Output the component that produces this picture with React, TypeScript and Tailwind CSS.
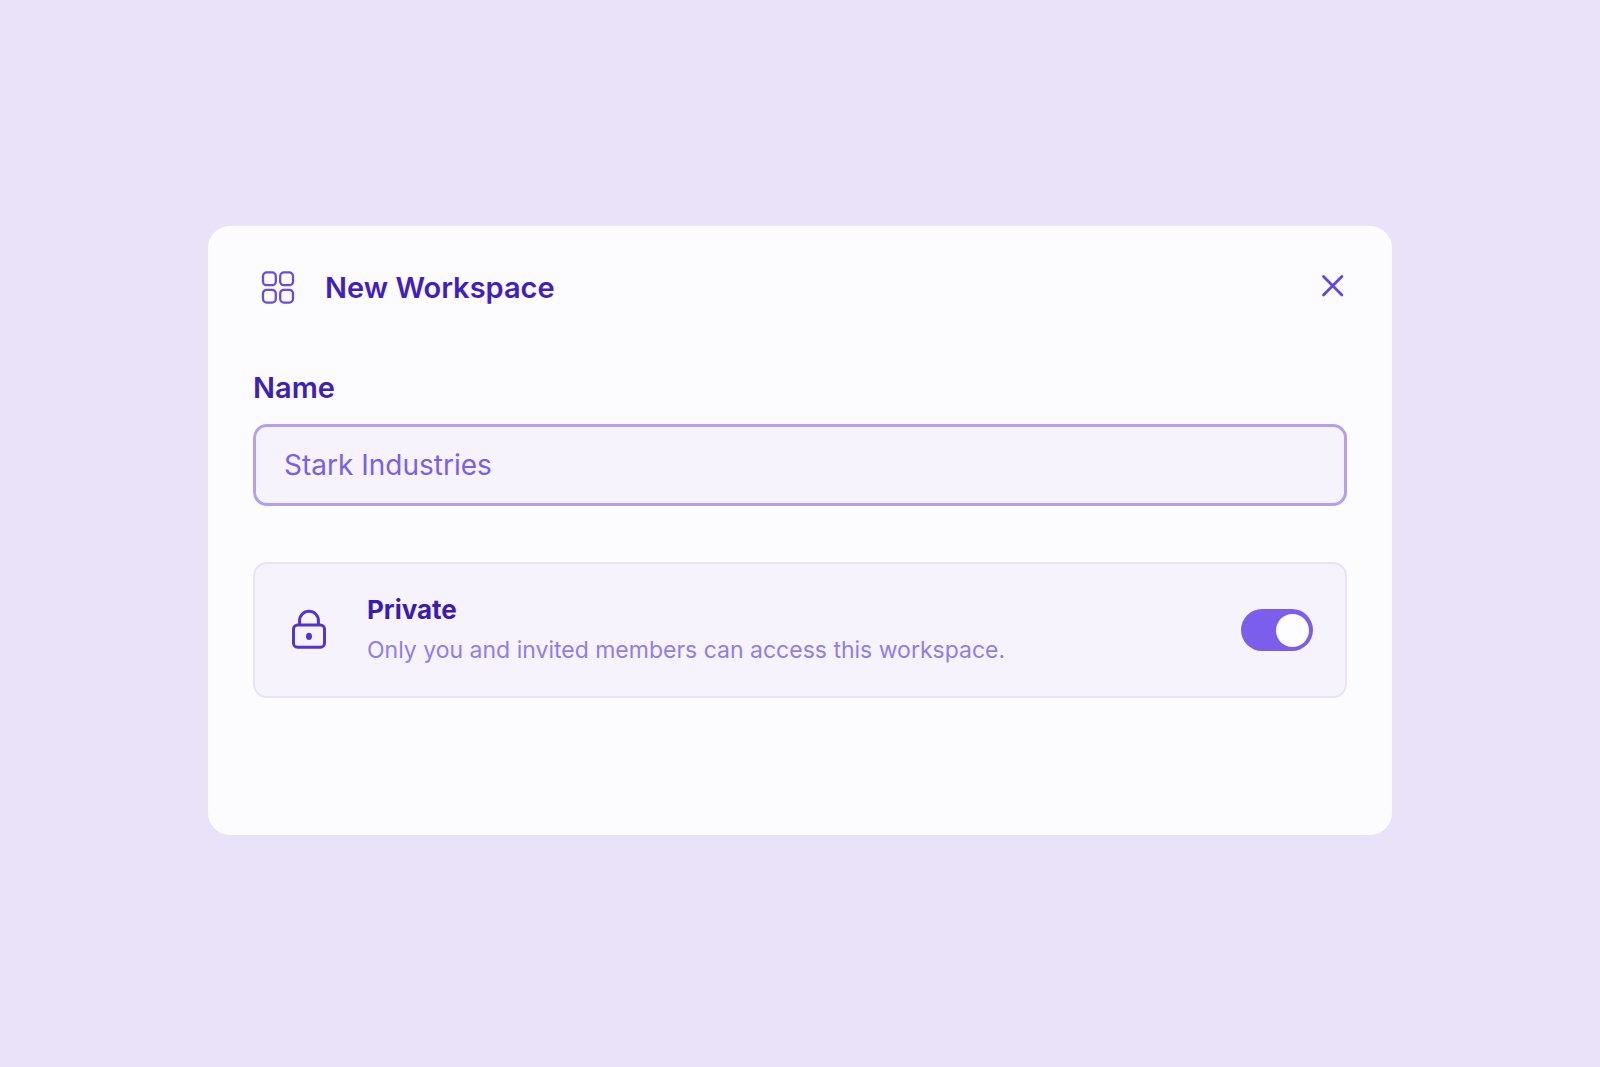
import { useState } from 'react';

export default function App() {
  const [name, setName] = useState('Stark Industries');
  const [isPrivate, setIsPrivate] = useState(true);

  return (
    <main className="min-h-screen flex items-center justify-center bg-[#eae2f8] pb-1.5 font-['Inter',sans-serif]">
      <section className="w-[74%] rounded-[22px] bg-[#fcfbfe] px-[45px] pt-[45px] pb-[137px]">
        <header className="flex items-start justify-between">
          <div className="flex items-center gap-[30px] pl-2">
            <svg width="34" height="34" viewBox="0 0 34 34" fill="none" stroke="#6a4be4" strokeWidth="2.3" aria-hidden="true">
              <rect x="2" y="1.4" width="12.8" height="12.8" rx="3.8" />
              <rect x="19.2" y="1.4" width="12.8" height="12.8" rx="3.8" />
              <rect x="2" y="18.8" width="12.8" height="12.8" rx="3.8" />
              <rect x="19.2" y="18.8" width="12.8" height="12.8" rx="3.8" />
            </svg>
            <h1 className="text-[29px] leading-[34px] font-semibold text-[#3f1fc4]">New Workspace</h1>
          </div>
          <button type="button" aria-label="Close" className="flex size-[30px] items-center justify-center">
            <svg width="24" height="24" viewBox="0 0 24 24" fill="none" stroke="#6444e8" strokeWidth="2.8" strokeLinecap="round">
              <path d="M3.5 2.5l18.4 18.4M21.9 2.5L3.5 20.9" />
            </svg>
          </button>
        </header>

        <div className="mt-[65px]">
          <label htmlFor="name" className="block text-[29px] leading-[36px] font-semibold text-[#3c20ba]">Name</label>
          <input
            id="name"
            type="text"
            value={name}
            onChange={(e) => setName(e.target.value)}
            className="mt-[18px] block h-[82px] w-full rounded-[14px] border-[3px] border-[#b3a0f0] bg-[#f6f3fd] px-7 text-[28px] text-[#7a5eee] outline-none"
          />
        </div>

        <div className="mt-14 flex items-center rounded-[14px] border-2 border-[#e9e2fc] bg-[#f6f3fd] px-8 py-[26px]">
          <svg width="44" height="44" viewBox="0 0 44 44" fill="none" stroke="#5433d6" strokeWidth="3" aria-hidden="true">
            <rect x="6.5" y="17.1" width="31" height="22.1" rx="4" />
            <path d="M12.6 17v-4.4a9.4 9.4 0 0 1 18.8 0V17" />
            <ellipse cx="22" cy="28.3" rx="3" ry="3.6" fill="#5433d6" stroke="none" />
          </svg>
          <label htmlFor="private" className="ml-[36px] flex-1">
            <span className="block text-[26px] leading-[40px] font-bold text-[#3a1cb4]">Private</span>
            <span className="block text-[23px] leading-[40px] text-[#917ee8]">
              Only you and invited members can access this workspace.
            </span>
          </label>
          <input
            id="private"
            type="checkbox"
            role="switch"
            checked={isPrivate}
            onChange={(e) => setIsPrivate(e.target.checked)}
            className="flex h-[42px] w-[72px] shrink-0 cursor-pointer appearance-none items-center rounded-full bg-[#c9bdf2] px-1 before:size-[33px] before:rounded-full before:bg-[#fdfcff] checked:justify-end checked:bg-[#7b5eec]"
          />
        </div>
      </section>
    </main>
  );
}
